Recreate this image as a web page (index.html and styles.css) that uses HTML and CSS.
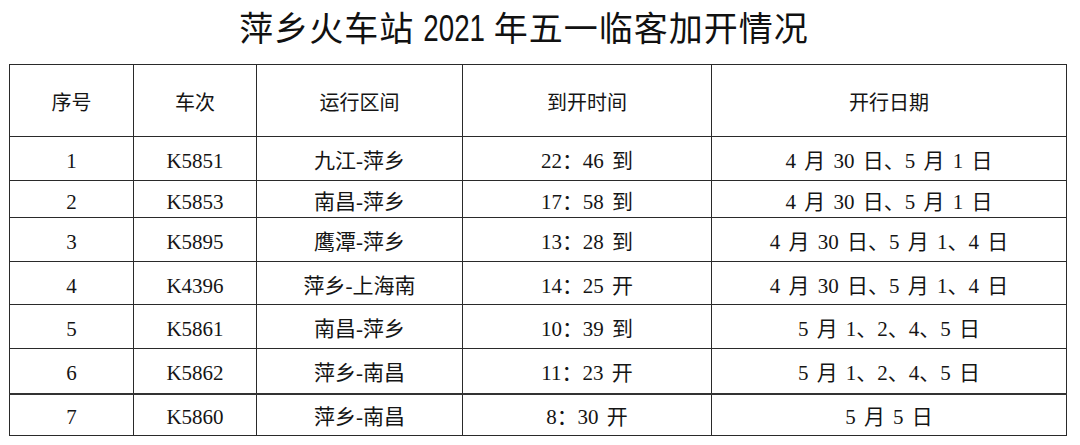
FILE: index.html
```html
<!DOCTYPE html>
<html lang="zh-CN">
<head>
<meta charset="utf-8">
<title>萍乡火车站 2021 年五一临客加开情况</title>
<link rel="stylesheet" href="styles.css">
</head>
<body>
<div class="page">
  <h1 class="title">萍乡火车站 <span class="num">2021</span> 年五一临客加开情况</h1>
  <table class="grid">
    <colgroup>
      <col class="c1"><col class="c2"><col class="c3"><col class="c4"><col class="c5">
    </colgroup>
    <thead>
      <tr class="head"><th>序号</th><th>车次</th><th>运行区间</th><th>到开时间</th><th>开行日期</th></tr>
    </thead>
    <tbody>
      <tr class="r1"><td>1</td><td>K5851</td><td>九江-萍乡</td><td>22：46 到</td><td>4 月 30 日、5 月 1 日</td></tr>
      <tr class="r2"><td>2</td><td>K5853</td><td>南昌-萍乡</td><td>17：58 到</td><td>4 月 30 日、5 月 1 日</td></tr>
      <tr class="r3"><td>3</td><td>K5895</td><td>鹰潭-萍乡</td><td>13：28 到</td><td>4 月 30 日、5 月 1、4 日</td></tr>
      <tr class="r4"><td>4</td><td>K4396</td><td>萍乡-上海南</td><td>14：25 开</td><td>4 月 30 日、5 月 1、4 日</td></tr>
      <tr class="r5"><td>5</td><td>K5861</td><td>南昌-萍乡</td><td>10：39 到</td><td>5 月 1、2、4、5 日</td></tr>
      <tr class="r6"><td>6</td><td>K5862</td><td>萍乡-南昌</td><td>11：23 开</td><td>5 月 1、2、4、5 日</td></tr>
      <tr class="r7"><td>7</td><td>K5860</td><td>萍乡-南昌</td><td>8：30 开</td><td>5 月 5 日</td></tr>
    </tbody>
  </table>
</div>
</body>
</html>
```
FILE: styles.css
```css
html, body {
  margin: 0;
  padding: 0;
  background: #ffffff;
}
.page {
  width: 1080px;
  height: 445px;
  overflow: hidden;
}
.title {
  margin: 0;
  height: 64px;
  box-sizing: border-box;
  padding: 4px 32px 0 0;
  text-align: center;
  font-family: "Noto Sans CJK SC", sans-serif;
  font-weight: 400;
  font-size: 34px;
  line-height: 46px;
  color: #111;
  letter-spacing: 1px;
}
.title .num {
  display: inline-block;
  font-family: "Liberation Sans", sans-serif;
  font-size: 37px;
  letter-spacing: 0;
  transform: scaleX(0.75);
  margin: 0 -10px;
}
.grid {
  margin-left: 9px;
  border-collapse: collapse;
  table-layout: fixed;
  width: 1057px;
  font-family: "Liberation Serif", "Noto Sans CJK SC", serif;
  font-size: 21px;
  word-spacing: 3px;
  color: #151515;
}
.c1 { width: 124px; }
.c2 { width: 123px; }
.c3 { width: 206px; }
.c4 { width: 249px; }
.c5 { width: 355px; }
.grid th, .grid td {
  border: 1px solid #2a2a2a;
  text-align: center;
  vertical-align: middle;
  padding: 5px 0 0 0;
  line-height: 24px;
  white-space: nowrap;
  box-sizing: border-box;
}
.grid th {
  font-weight: 400;
  font-size: 20px;
}
.head { height: 72px; }
.r1 { height: 44px; }
.r2 { height: 37px; }
.r3 { height: 44px; }
.r4 { height: 43px; }
.r5 { height: 44px; }
.r6 { height: 45px; }
.r7 { height: 42px; }
.r7 td { border-top: 2px solid #333; }
```
